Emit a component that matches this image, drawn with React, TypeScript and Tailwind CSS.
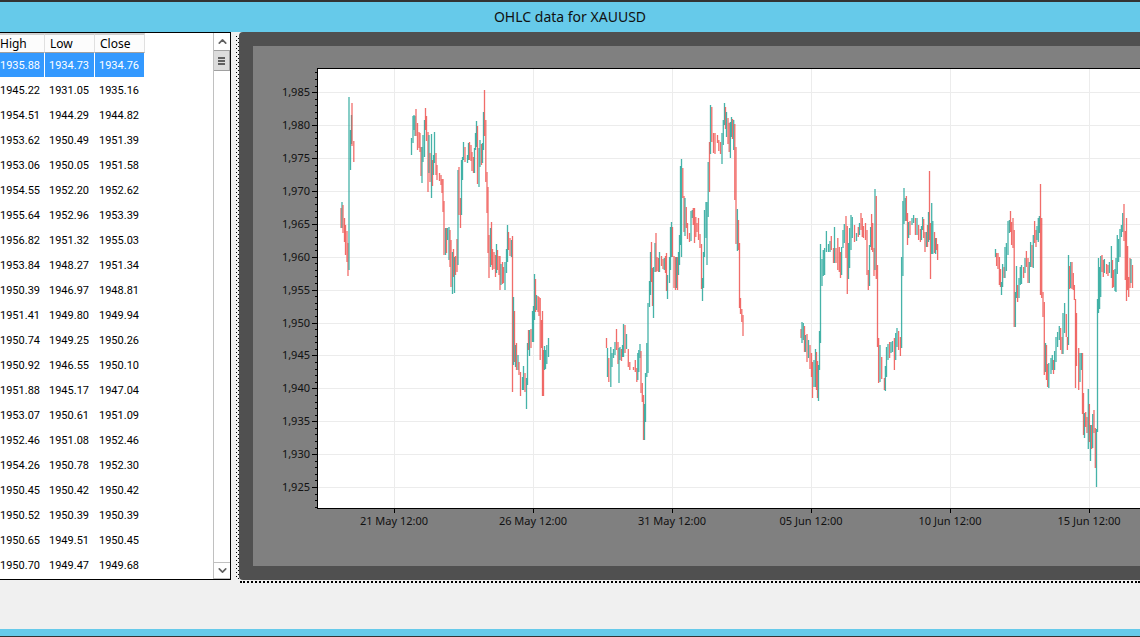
import { JSX } from 'react';
import clsx from 'clsx';
import { ChevronDown, ChevronUp } from 'lucide-react';

type Candle = [x: number, high: number, low: number, up: 0 | 1];

const columns = ['High', 'Low', 'Close'];

const rows: string[][] = [
  ['1935.88', '1934.73', '1934.76'],
  ['1945.22', '1931.05', '1935.16'],
  ['1954.51', '1944.29', '1944.82'],
  ['1953.62', '1950.49', '1951.39'],
  ['1953.06', '1950.05', '1951.58'],
  ['1954.55', '1952.20', '1952.62'],
  ['1955.64', '1952.96', '1953.39'],
  ['1956.82', '1951.32', '1955.03'],
  ['1953.84', '1948.27', '1951.34'],
  ['1950.39', '1946.97', '1948.81'],
  ['1951.41', '1949.80', '1949.94'],
  ['1950.74', '1949.25', '1950.26'],
  ['1950.92', '1946.55', '1950.10'],
  ['1951.88', '1945.17', '1947.04'],
  ['1953.07', '1950.61', '1951.09'],
  ['1952.46', '1951.08', '1952.46'],
  ['1954.26', '1950.78', '1952.30'],
  ['1950.45', '1950.42', '1950.42'],
  ['1950.52', '1950.39', '1950.39'],
  ['1950.65', '1949.51', '1950.45'],
  ['1950.70', '1949.47', '1949.68'],
];

// one block per trading week part, in plot units
const candles: Candle[] = [
  [341, 208, 228, 0], [342, 202, 228, 1], [343, 205, 233, 0], [344.5, 218, 242, 0], [345.5, 225, 255, 0], [347, 231, 262, 0],
  [348, 243, 276, 0], [349, 97, 270, 1], [350.5, 130, 170, 1], [351.5, 115, 144, 1], [352, 103, 146, 0], [353.8, 141, 162, 0],

  [411.5, 138, 155, 1], [413, 116, 143, 1], [414, 115, 130, 1], [415, 116, 136, 1], [416, 109, 136, 0], [417.5, 123, 150, 0],
  [419, 132, 148, 0], [420, 133, 152, 0], [421, 147, 176, 0], [422, 147, 183, 1], [423, 135, 162, 1], [424.5, 120, 157, 1],
  [425.5, 108, 130, 0], [426.5, 116, 141, 0], [428, 132, 192, 0], [429, 135, 173, 1], [430, 153, 182, 0], [431.5, 134, 198, 1],
  [432.5, 160, 186, 0], [433.5, 155, 175, 1], [434.5, 132, 163, 1], [436, 153, 175, 0], [437, 165, 180, 0], [439.5, 173, 181, 0],
  [441, 175, 185, 0], [442, 179, 193, 0], [443, 179, 212, 0], [444, 201, 255, 0], [445.5, 228, 255, 1], [446.5, 228, 253, 0],
  [447.5, 228, 240, 1], [449, 227, 260, 1], [450, 230, 267, 0], [451, 240, 287, 0], [452.5, 252, 294, 1], [453.5, 249, 277, 0],
  [454.5, 257, 293, 1], [455.5, 256, 275, 0], [457, 239, 272, 0], [458, 170, 265, 1], [459, 167, 215, 0], [460.5, 198, 228, 0],
  [461.5, 160, 215, 1], [462.5, 157, 180, 1], [463.5, 142, 160, 1], [465, 147, 162, 0], [467.5, 155, 163, 1], [468.5, 143, 160, 1],
  [469.5, 142, 160, 0], [471, 145, 161, 0], [472, 152, 171, 0], [473.5, 157, 173, 0], [474.5, 148, 173, 1], [475.5, 133, 150, 1],
  [476.5, 121, 147, 1], [477.5, 126, 184, 0], [479, 148, 187, 1], [480, 140, 167, 1], [481.5, 144, 165, 0], [482.5, 143, 163, 1],
  [483.5, 112, 150, 1], [484.5, 90, 136, 0], [485.8, 120, 182, 0], [487, 172, 213, 0], [488, 187, 253, 0], [489, 235, 278, 0],
  [490.5, 228, 267, 1], [491.5, 222, 265, 0], [492.5, 249, 270, 0], [494, 252, 269, 0], [495.5, 255, 277, 0], [496.5, 244, 273, 1],
  [497.5, 250, 270, 0], [499, 256, 275, 0], [500, 256, 290, 0], [501, 264, 285, 1], [502.5, 262, 284, 0], [503.5, 267, 283, 0],
  [505, 262, 290, 1], [506.5, 249, 273, 1], [507.5, 225, 262, 1], [508.5, 232, 250, 0], [510, 238, 256, 0], [511.5, 240, 257, 1],
  [512.5, 236, 392, 0], [513.5, 297, 365, 1], [514.5, 311, 362, 0], [515.5, 345, 367, 1], [516.5, 343, 370, 0], [518, 355, 370, 1],
  [519, 362, 375, 0], [520.5, 372, 396, 0], [522.5, 377, 390, 1], [523.5, 366, 390, 1], [525, 373, 392, 0], [526.5, 378, 409, 1],
  [527.5, 343, 385, 1], [528.5, 330, 350, 0], [529.5, 330, 356, 1], [531, 329, 348, 0], [532.5, 311, 342, 1], [533.5, 306, 342, 1],
  [534.5, 274, 320, 1], [535.5, 279, 312, 0], [536.5, 295, 310, 1], [538, 296, 312, 0], [539, 297, 316, 0], [540.2, 298, 360, 0],
  [541.5, 320, 348, 0], [542.5, 311, 396, 0], [543.5, 350, 396, 0], [544.5, 346, 370, 1], [545.5, 350, 369, 1], [546.8, 345, 364, 1],
  [548.5, 338, 357, 1],

  [606.5, 338, 348, 0], [607.5, 348, 377, 1], [608.8, 358, 382, 0], [610.8, 347, 387, 1], [612, 353, 367, 1], [613.5, 349, 358, 1],
  [615, 342, 355, 1], [616.5, 329, 350, 0], [618, 342, 364, 0], [619, 348, 383, 1], [620, 347, 360, 1], [621.5, 349, 361, 0],
  [622.5, 345, 357, 1], [623.5, 324, 357, 1], [625, 325, 353, 0], [626.5, 334, 349, 1], [628.3, 349, 367, 0], [629.8, 362, 370, 0],
  [633.5, 367, 370, 0], [635.3, 360, 372, 0], [636.8, 368, 382, 0], [637.8, 353, 380, 1], [638.8, 350, 372, 1], [640, 344, 358, 1],
  [641, 351, 393, 0], [642.3, 383, 402, 0], [643.5, 395, 440, 0], [644.5, 404, 440, 1], [645.5, 373, 422, 1], [646.8, 343, 377, 1],
  [648, 303, 373, 1], [649.5, 281, 307, 1], [650.5, 252, 295, 1], [651.5, 242, 282, 0], [652.5, 268, 306, 0], [653.5, 267, 318, 1],
  [655, 243, 272, 1], [656, 233, 272, 0], [657, 257, 271, 0], [658.5, 258, 272, 0], [659.5, 252, 272, 1], [661.5, 256, 266, 0],
  [663, 259, 269, 0], [664.3, 258, 270, 1], [665.5, 256, 273, 0], [666.5, 253, 291, 0], [667.5, 275, 299, 1], [669.5, 257, 283, 1],
  [670.5, 227, 270, 1], [671.5, 222, 257, 1], [672.5, 227, 257, 0], [674, 256, 288, 0], [675.5, 257, 290, 0], [676.5, 257, 288, 1],
  [677.5, 257, 290, 0], [678.5, 252, 275, 1], [679.5, 235, 265, 1], [680.5, 166, 245, 1], [681.5, 159, 257, 1], [682.8, 168, 198, 0],
  [684, 196, 232, 0], [685, 198, 236, 1], [686.3, 207, 228, 0], [687.5, 223, 239, 0], [689.5, 233, 242, 0], [691, 211, 241, 1],
  [692.3, 210, 218, 1], [693.3, 208, 225, 0], [694.5, 208, 243, 0], [695.8, 217, 237, 0], [697, 223, 232, 0], [698.5, 218, 240, 0],
  [700, 234, 248, 0], [701.5, 244, 289, 0], [702.5, 278, 301, 1], [703.5, 252, 288, 1], [704.5, 210, 257, 1], [706, 202, 238, 1],
  [707, 202, 265, 1], [708.2, 162, 217, 1], [709.5, 142, 192, 0], [710.5, 105, 154, 1], [711.8, 107, 142, 0], [713.5, 133, 153, 0],
  [715, 133, 154, 0], [717.5, 135, 143, 0], [718.8, 140, 151, 0], [720.5, 142, 154, 0], [722, 133, 164, 1], [723.3, 120, 145, 1],
  [724.5, 103, 125, 1], [725.5, 107, 129, 0], [726.5, 112, 137, 1], [728, 118, 144, 0], [729.2, 123, 152, 0], [730.4, 122, 158, 1],
  [731.5, 117, 137, 1], [732.5, 119, 139, 0], [733.7, 120, 150, 1], [734.8, 124, 200, 0], [736, 147, 244, 0], [737.4, 209, 251, 1],
  [738.5, 220, 250, 0], [739.5, 243, 308, 0], [740.5, 298, 314, 0], [741.8, 309, 322, 0], [743, 315, 336, 0],

  [801, 329, 338, 0], [802, 322, 343, 1], [803.3, 323, 340, 1], [804.5, 326, 352, 0], [805.5, 335, 352, 1], [807, 334, 362, 0],
  [808.5, 340, 358, 1], [810, 345, 369, 0], [811.5, 353, 377, 0], [812.5, 362, 398, 0], [814, 360, 387, 1], [815.5, 349, 387, 1],
  [816.5, 352, 390, 0], [817.5, 361, 398, 0], [818.5, 365, 401, 1], [819.5, 331, 370, 1], [820.5, 244, 343, 1], [822, 259, 286, 1],
  [823.3, 250, 276, 1], [824.6, 248, 275, 1], [826.4, 231, 252, 1], [828.5, 244, 252, 1], [830, 241, 252, 1], [831.3, 236, 250, 0],
  [833.5, 248, 263, 0], [834.5, 227, 263, 1], [836, 248, 263, 0], [837.8, 238, 270, 0], [839.3, 247, 272, 0], [840.5, 252, 278, 0],
  [841.6, 247, 275, 1], [843, 230, 248, 1], [844.3, 224, 243, 1], [846, 216, 258, 0], [847.3, 226, 294, 0], [848.5, 243, 279, 1],
  [849.6, 228, 268, 1], [851, 215, 250, 1], [852.3, 217, 238, 1], [854.5, 225, 242, 0], [856.5, 233, 241, 1], [858.3, 227, 237, 0],
  [859.5, 223, 235, 1], [861, 213, 230, 0], [862.3, 218, 237, 0], [863.5, 226, 238, 0], [865.5, 223, 240, 0], [867, 230, 275, 0],
  [868.3, 270, 290, 0], [869.5, 245, 286, 1], [870.6, 227, 247, 1], [871.6, 214, 250, 0], [872.7, 223, 252, 0], [874, 248, 276, 0],
  [875, 189, 270, 1], [876.3, 196, 279, 0], [877.5, 265, 347, 0], [878.6, 338, 383, 0], [880, 345, 382, 1], [881.7, 357, 379, 0],
  [884.4, 378, 390, 0], [885.4, 366, 391, 1], [886.5, 347, 377, 1], [888, 344, 360, 1], [889.6, 342, 358, 0], [891, 342, 353, 1],
  [892.5, 341, 352, 1], [894.4, 338, 370, 0], [895.7, 333, 360, 1], [897, 328, 347, 1], [898.6, 331, 350, 0], [900.4, 337, 356, 0],
  [901.6, 257, 348, 1], [902.9, 201, 276, 1], [904, 188, 224, 1], [905.3, 198, 221, 1], [906.4, 196, 221, 0], [907.5, 213, 245, 0],
  [908.6, 222, 238, 1], [910, 221, 235, 0], [912, 218, 225, 1], [913.6, 215, 223, 1], [915.4, 218, 235, 0], [917, 218, 235, 1],
  [918.6, 225, 240, 0], [920.4, 229, 242, 0], [921.5, 226, 240, 1], [922.6, 217, 230, 1], [923.7, 219, 238, 0], [925, 232, 252, 0],
  [926.4, 232, 247, 1], [927.5, 225, 247, 0], [928.5, 212, 242, 1], [929.5, 171, 240, 0], [930.5, 223, 279, 0], [931.7, 203, 254, 1],
  [932.8, 221, 254, 1], [934.5, 232, 253, 0], [935.6, 238, 254, 1], [936.4, 238, 250, 0], [937.6, 244, 260, 0],

  [995.5, 249, 257, 1], [996.6, 253, 266, 0], [998, 253, 269, 0], [999.4, 257, 285, 0], [1000.5, 269, 287, 0], [1001.5, 282, 295, 1],
  [1002.6, 264, 287, 1], [1004, 267, 278, 0], [1005, 247, 278, 1], [1006.4, 243, 271, 1], [1008, 221, 255, 1], [1009.4, 220, 233, 1],
  [1010.5, 211, 232, 0], [1011.6, 222, 245, 0], [1013, 218, 248, 0], [1014.2, 230, 327, 0], [1015.4, 292, 327, 1], [1016.5, 266, 298, 1],
  [1017.6, 285, 302, 0], [1019, 278, 298, 1], [1020.3, 267, 285, 1], [1021.5, 265, 284, 1], [1023.6, 267, 278, 0], [1025, 258, 273, 1],
  [1026.4, 251, 267, 0], [1028, 258, 283, 0], [1029.3, 262, 283, 1], [1030.6, 242, 267, 1], [1032, 245, 267, 0], [1033.3, 235, 268, 1],
  [1034.6, 221, 243, 0], [1036, 230, 247, 0], [1037, 226, 240, 1], [1038.3, 218, 242, 1], [1039.4, 216, 233, 1], [1040.5, 184, 295, 0],
  [1041.7, 218, 298, 0], [1043, 292, 317, 0], [1044.3, 302, 375, 0], [1045.5, 343, 372, 1], [1046.5, 345, 380, 0], [1047.6, 364, 387, 0],
  [1048.8, 363, 388, 1], [1051, 358, 374, 1], [1052.3, 355, 370, 1], [1053.5, 360, 374, 0], [1054.6, 351, 370, 1], [1056, 337, 362, 1],
  [1057.6, 332, 347, 1], [1059.3, 326, 340, 1], [1060.6, 328, 350, 0], [1062, 337, 354, 0], [1063, 313, 354, 1], [1064.6, 303, 333, 1],
  [1066.3, 314, 337, 0], [1067.4, 337, 350, 0], [1068.5, 255, 345, 1], [1069.6, 266, 289, 0], [1070.7, 262, 288, 1], [1072, 262, 289, 0],
  [1073.3, 273, 290, 0], [1074.4, 285, 300, 0], [1075.5, 299, 388, 0], [1076.5, 313, 366, 0], [1078.7, 348, 390, 0], [1080, 353, 382, 1],
  [1081.4, 353, 370, 1], [1082.5, 353, 414, 0], [1083.5, 393, 435, 0], [1084.5, 413, 438, 1], [1085.7, 412, 427, 0], [1087, 417, 433, 0],
  [1088.3, 389, 449, 1], [1089.4, 404, 442, 0], [1090.5, 425, 461, 1], [1091.6, 425, 449, 0], [1092.7, 414, 448, 1], [1094, 410, 433, 0],
  [1095.3, 428, 468, 0], [1096.5, 429, 487, 1], [1097.5, 299, 432, 1], [1098.5, 258, 313, 1], [1099.6, 267, 309, 1], [1100.7, 256, 297, 1],
  [1102, 255, 272, 0], [1103.3, 260, 277, 0], [1104.4, 259, 273, 1], [1106.6, 264, 274, 0], [1108, 265, 276, 0], [1109.4, 262, 273, 1],
  [1111.4, 246, 278, 1], [1112.5, 260, 288, 0], [1113.6, 270, 287, 0], [1115, 269, 291, 1], [1116, 258, 292, 1], [1117.3, 235, 274, 1],
  [1118.6, 239, 262, 1], [1120, 229, 257, 1], [1121.4, 225, 237, 1], [1122.7, 213, 232, 1], [1124, 204, 241, 0], [1125.3, 231, 280, 0],
  [1126.5, 218, 301, 0], [1127.6, 246, 290, 0], [1128.7, 277, 297, 0], [1130, 258, 288, 0], [1131, 259, 283, 1], [1132.5, 265, 288, 0],
];

const prices = Array.from({ length: 13 }, (_, i) => 1985 - i * 5);
const minorPrices = Array.from({ length: 67 }, (_, i) => 1988 - i);
const dates = ['21 May 12:00', '26 May 12:00', '31 May 12:00', '05 Jun 12:00', '10 Jun 12:00', '15 Jun 12:00'];

const LEFT = 317;
const TOP = 68;
const BOTTOM = 508;
const RIGHT = 2400;

const priceY = (price: number): number => Math.round(92.1 + (1985 - price) * 6.583) + 0.5;
const dateX = (index: number): number => 394.5 + index * 139;

function PriceChart(): JSX.Element {
  return (
    <svg className="block h-[520px] w-full overflow-hidden font-['Noto_Sans',sans-serif] text-[11px]" role="img" aria-label="XAUUSD">
      <g transform="translate(-253 -46)">
        <rect x={LEFT} y={TOP} width={RIGHT - LEFT} height={BOTTOM - TOP} fill="#fff" />
        <g stroke="#ececec">
          {prices.map((price) => (
            <line key={price} x1={LEFT} x2={RIGHT} y1={priceY(price)} y2={priceY(price)} />
          ))}
          {dates.map((date, i) => (
            <line key={date} x1={dateX(i)} x2={dateX(i)} y1={TOP} y2={BOTTOM} />
          ))}
        </g>
        <g strokeWidth={1.3} strokeOpacity={0.85}>
          {candles.map(([x, high, low, up]) => (
            <line key={x} x1={x} x2={x} y1={high} y2={low} stroke={up ? '#26a69a' : '#ef5350'} />
          ))}
        </g>
        <g stroke="#000">
          <rect x={LEFT + 0.5} y={TOP + 0.5} width={RIGHT - LEFT} height={BOTTOM - TOP} fill="none" />
          {minorPrices.map((price) => (
            <line key={price} x1={315} x2={LEFT} y1={priceY(price)} y2={priceY(price)} />
          ))}
          {prices.map((price) => (
            <line key={price} x1={312} x2={LEFT} y1={priceY(price)} y2={priceY(price)} />
          ))}
          {dates.map((date, i) => (
            <line key={date} x1={dateX(i)} x2={dateX(i)} y1={BOTTOM} y2={513} />
          ))}
        </g>
        <g fill="#111" textAnchor="end">
          {prices.map((price) => (
            <text key={price} x={310} y={priceY(price) + 3.5}>
              {price.toLocaleString('en-US')}
            </text>
          ))}
        </g>
        <g fill="#111" textAnchor="middle">
          {dates.map((date, i) => (
            <text key={date} x={dateX(i) - 0.5} y={525}>
              {date}
            </text>
          ))}
        </g>
      </g>
    </svg>
  );
}

function ScrollBar(): JSX.Element {
  return (
    <div className="flex w-[17px] shrink-0 flex-col border-l border-[#c0c0c0] bg-white">
      <button type="button" aria-label="Scroll up" className="flex h-[17px] items-center justify-center">
        <ChevronUp size={13} color="#606060" strokeWidth={3} />
      </button>
      <div className="flex h-[21px] flex-col items-center justify-center gap-px border border-l-0 border-[#a0a0a0] bg-[#dcdcdc]">
        <span className="h-[2px] w-[7px] bg-[#606060]" />
        <span className="h-[2px] w-[7px] bg-[#606060]" />
        <span className="h-[2px] w-[7px] bg-[#606060]" />
      </div>
      <button type="button" aria-label="Scroll down" className="mt-auto flex h-[17px] items-center justify-center border-y border-[#c0c0c0]">
        <ChevronDown size={13} color="#606060" strokeWidth={3} />
      </button>
    </div>
  );
}

function OhlcTable(): JSX.Element {
  return (
    <div className="flex w-[231px] shrink-0 border-y border-r border-black bg-white">
      <div className="flex-1 pb-px">
        <table className="w-[145px] table-fixed border-separate border-spacing-0 text-black">
          <colgroup>
            <col className="w-[45px]" />
            <col className="w-[50px]" />
            <col className="w-[50px]" />
          </colgroup>
          <thead>
            <tr>
              {columns.map((column, i) => (
                <th
                  key={column}
                  className={clsx(
                    "h-[20px] border-t-2 border-r border-b border-t-[#d0d0d0] border-r-[#e0e0e0] border-b-[#a0a0a0] bg-[#fcfcfc] p-0 text-left font-['Noto_Sans',sans-serif] text-[12px] leading-[16px] font-normal",
                    i > 0 && 'pl-[5px]',
                  )}
                >
                  {column}
                </th>
              ))}
            </tr>
          </thead>
          <tbody>
            {rows.map((row, r) => (
              <tr key={r} className={r === 0 ? 'text-white' : undefined}>
                {row.map((value, i) => (
                  <td
                    key={i}
                    className={clsx(
                      "h-[25px] border-r border-b border-white p-0 pt-0.5 font-['Roboto',sans-serif] text-[11px] leading-[22px]",
                      i > 0 && 'pl-1',
                      r === 0 && 'bg-[#3399ff]',
                    )}
                  >
                    {value}
                  </td>
                ))}
              </tr>
            ))}
          </tbody>
        </table>
      </div>
      <ScrollBar />
    </div>
  );
}

// staggered dots of the focus frame around the chart
function SplitterDots(): JSX.Element {
  return (
    <div className="flex w-2 shrink-0 justify-end gap-px">
      <div className="mt-1 w-px bg-[repeating-linear-gradient(to_bottom,#000_0_1px,transparent_1px_4px)]" />
      <div className="mt-1.5 w-px bg-[repeating-linear-gradient(to_bottom,#000_0_1px,transparent_1px_4px)]" />
    </div>
  );
}

function App(): JSX.Element {
  return (
    <div className="flex min-h-screen flex-col overflow-hidden bg-[#f0f0f0]">
      <header className="flex h-8 items-center justify-center border-t-2 border-[#333] bg-[#66caea]">
        <h1 className="font-['Noto_Sans',sans-serif] text-[14px] leading-5 text-[#111]">OHLC data for XAUUSD</h1>
      </header>
      <main className="flex">
        <OhlcTable />
        <SplitterDots />
        <div className="min-w-0 flex-1 rounded-l bg-[#505050] py-[14px] pl-[14px]">
          <div className="bg-[#808080]">
            <PriceChart />
          </div>
        </div>
      </main>
      <div className="mt-px ml-[240px] border-t-2 border-dotted border-black" />
      <footer className="mt-auto h-2 border-b border-[#333] bg-[#66caea]" />
    </div>
  );
}

export default App;
